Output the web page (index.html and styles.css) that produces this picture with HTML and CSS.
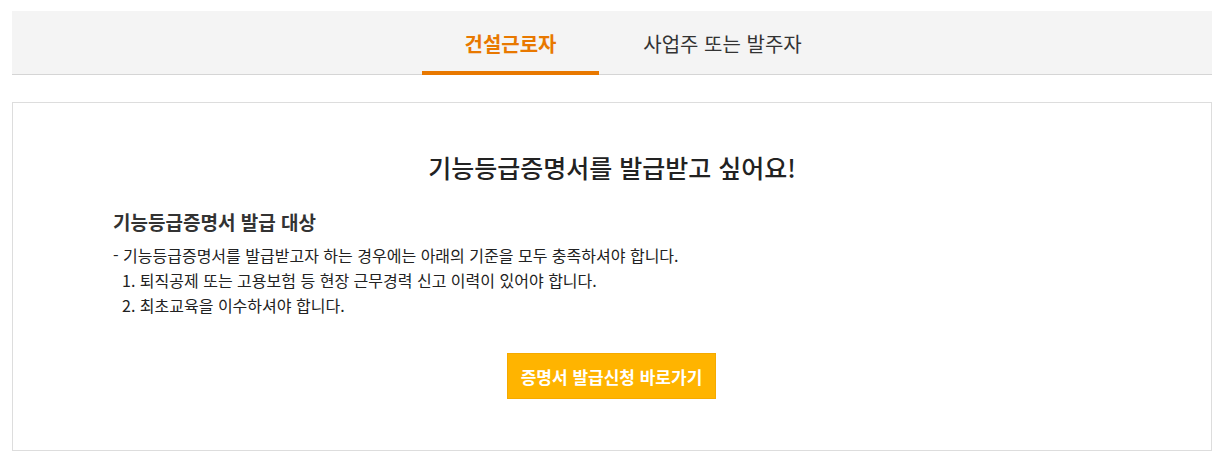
FILE: index.html
```html
<!DOCTYPE html>
<html lang="ko">
<head>
<meta charset="utf-8">
<title>기능등급증명서</title>
<link rel="stylesheet" href="styles.css">
</head>
<body>
<div class="wrap">
  <nav class="tabs">
    <a class="tab active">건설근로자</a>
    <a class="tab">사업주 또는 발주자</a>
  </nav>
  <section class="card">
    <h2 class="title">기능등급증명서를 발급받고 싶어요!</h2>
    <h3 class="subtitle">기능등급증명서 발급 대상</h3>
    <p class="line">- 기능등급증명서를 발급받고자 하는 경우에는 아래의 기준을 모두 충족하셔야 합니다.</p>
    <ol class="list">
      <li>1. 퇴직공제 또는 고용보험 등 현장 근무경력 신고 이력이 있어야 합니다.</li>
      <li>2. 최초교육을 이수하셔야 합니다.</li>
    </ol>
    <div class="actions">
      <a class="btn">증명서 발급신청 바로가기</a>
    </div>
  </section>
</div>
</body>
</html>
```
FILE: styles.css
```css
* { box-sizing: border-box; }
html, body { margin: 0; padding: 0; background: #fff; }
body {
  font-family: "Noto Sans CJK KR", "Noto Sans", sans-serif;
  color: #333;
}
.wrap {
  width: 1200px;
  margin: 11px 0 0 12px;
}
.tabs {
  display: flex;
  justify-content: center;
  gap: 35px;
  height: 64px;
  padding-left: 9px;
  background: #f4f4f4;
  border-bottom: 1px solid #d5d5d5;
}
.tab {
  width: 177px;
  height: 64px;
  flex: none;
  display: flex;
  align-items: center;
  justify-content: center;
  font-size: 20px;
  color: #333;
  border-bottom: 4px solid transparent;
  padding-top: 4px;
}
.tab.active {
  color: #e87800;
  font-weight: 700;
  border-bottom-color: #e87800;
}
.card {
  margin-top: 27px;
  border: 1px solid #dddddd;
  padding: 46px 100px 51px;
}
.title {
  margin: 0;
  text-align: center;
  font-size: 25px;
  font-weight: 500;
  line-height: 36px;
  color: #222;
}
.subtitle {
  margin: 24px 0 8px;
  font-size: 19px;
  font-weight: 700;
  line-height: 26px;
  color: #333;
}
.line {
  margin: 0;
  font-size: 16px;
  line-height: 25px;
  color: #222;
}
.list {
  list-style: none;
  margin: 0;
  padding: 0 0 0 9px;
  font-size: 16px;
  line-height: 25px;
  color: #222;
}
.actions {
  display: flex;
  justify-content: center;
  margin-top: 35px;
  padding-right: 1px;
}
.btn {
  display: flex;
  align-items: center;
  justify-content: center;
  width: 209px;
  height: 46px;
  background: #ffb400;
  border: 1px solid #f5aa00;
  color: #fff;
  font-size: 17px;
  font-weight: 700;
}
```
